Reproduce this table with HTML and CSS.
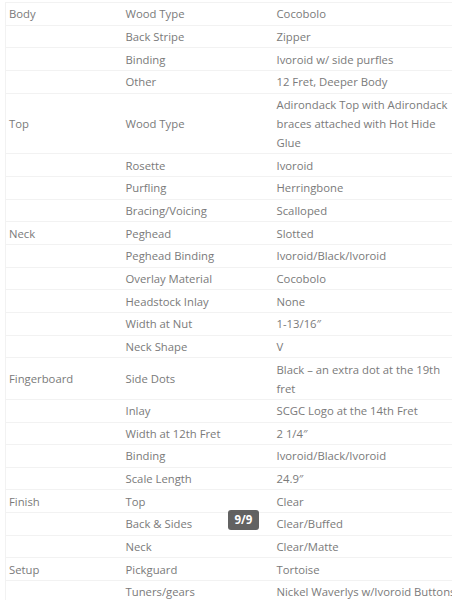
FILE: index.html
```html
<!DOCTYPE html>
<html>
<head>
<meta charset="utf-8">
<link rel="stylesheet" href="styles.css">
</head>
<body>
<div class="wrap">
<table class="specs">
<colgroup><col class="c1"><col class="c2"><col class="c3"></colgroup>
<tbody>
<tr><td>Body</td><td>Wood Type</td><td>Cocobolo</td></tr>
<tr><td></td><td>Back Stripe</td><td>Zipper</td></tr>
<tr><td></td><td>Binding</td><td>Ivoroid w/ side purfles</td></tr>
<tr><td></td><td>Other</td><td>12 Fret, Deeper Body</td></tr>
<tr><td>Top</td><td>Wood Type</td><td>Adirondack Top with Adirondack braces attached with Hot Hide Glue</td></tr>
<tr><td></td><td>Rosette</td><td>Ivoroid</td></tr>
<tr><td></td><td>Purfling</td><td>Herringbone</td></tr>
<tr><td></td><td>Bracing/Voicing</td><td>Scalloped</td></tr>
<tr><td>Neck</td><td>Peghead</td><td>Slotted</td></tr>
<tr><td></td><td>Peghead Binding</td><td>Ivoroid/Black/Ivoroid</td></tr>
<tr><td></td><td>Overlay Material</td><td>Cocobolo</td></tr>
<tr><td></td><td>Headstock Inlay</td><td>None</td></tr>
<tr><td></td><td>Width at Nut</td><td>1-13/16″</td></tr>
<tr><td></td><td>Neck Shape</td><td>V</td></tr>
<tr><td>Fingerboard</td><td>Side Dots</td><td>Black – an extra dot at the 19th fret</td></tr>
<tr><td></td><td>Inlay</td><td>SCGC Logo at the 14th Fret</td></tr>
<tr><td></td><td>Width at 12th Fret</td><td>2 1/4″</td></tr>
<tr><td></td><td>Binding</td><td>Ivoroid/Black/Ivoroid</td></tr>
<tr><td></td><td>Scale Length</td><td>24.9″</td></tr>
<tr><td>Finish</td><td>Top</td><td>Clear</td></tr>
<tr><td></td><td>Back &amp; Sides</td><td>Clear/Buffed</td></tr>
<tr><td></td><td>Neck</td><td>Clear/Matte</td></tr>
<tr><td>Setup</td><td>Pickguard</td><td>Tortoise</td></tr>
<tr><td></td><td>Tuners/gears</td><td>Nickel Waverlys w/Ivoroid Buttons</td></tr>
</tbody>
</table>
<div class="badge">9/9</div>
</div>
</body>
</html>
```

FILE: styles.css
```css
html, body {
  margin: 0;
  padding: 0;
  background: #fff;
  overflow: hidden;
}
.wrap {
  position: relative;
  width: 452px;
  height: 600px;
  overflow: hidden;
}
.specs {
  margin: 2px 0 0 5px;
  width: 460px;
  table-layout: fixed;
  border-collapse: collapse;
  font-family: "Open Sans", "Noto Sans", sans-serif;
  font-size: 11.3px;
  line-height: 19px;
  color: #7a7a7a;
  border-left: 1px solid #f2f2f2;
}
.c1 { width: 117px; }
.c2 { width: 151px; }
.c3 { width: 192px; }
.specs td {
  padding: 1.33px 4px 1.33px 3px;
  border-top: 1px solid #f2f2f2;
  vertical-align: middle;
}
.badge {
  position: absolute;
  left: 228px;
  top: 510px;
  width: 31px;
  height: 20px;
  border-radius: 3px;
  background: rgba(70, 70, 70, 0.85);
  color: #fff;
  font-family: "Open Sans", "Noto Sans", sans-serif;
  font-weight: 700;
  font-size: 11.5px;
  line-height: 20px;
  text-align: center;
}
```
